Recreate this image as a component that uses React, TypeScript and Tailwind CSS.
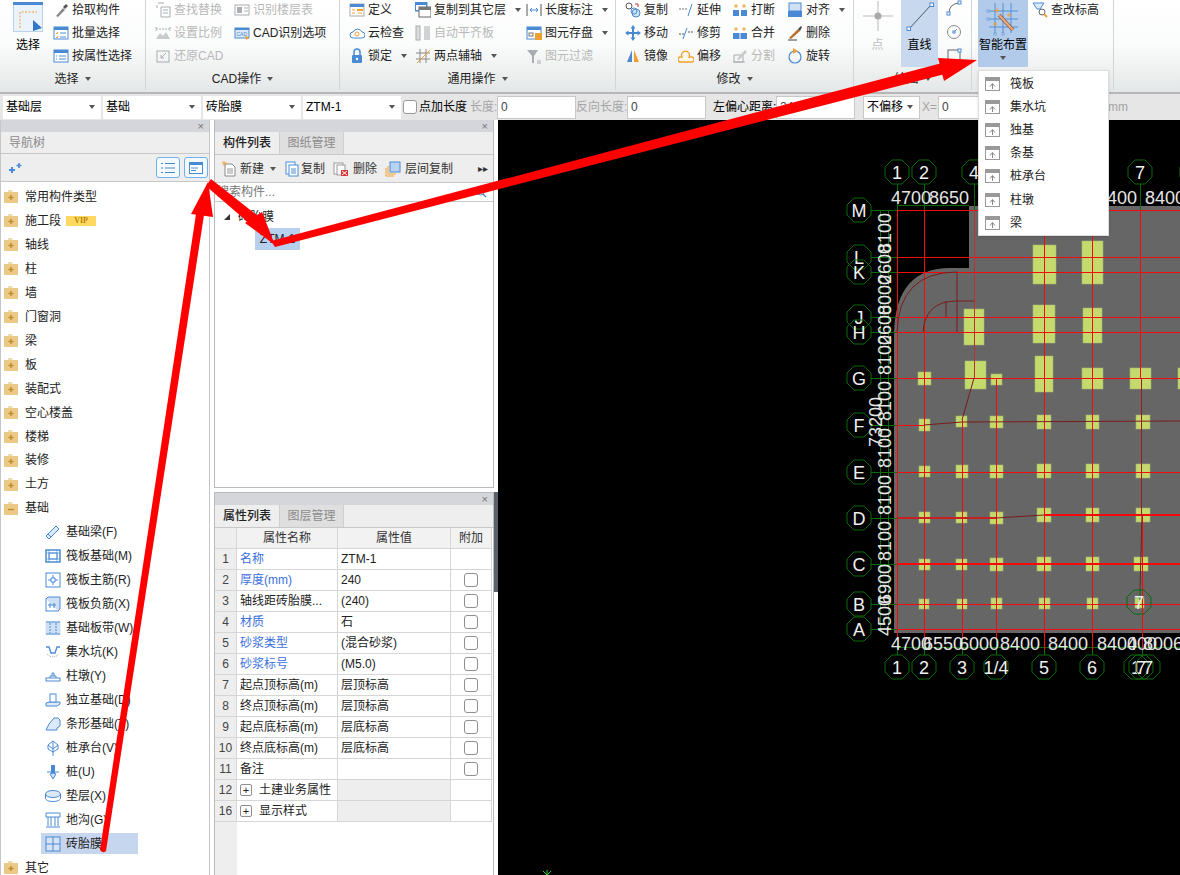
import type { ReactNode } from 'react'

const B = '#4a8ad4'
const O = '#f0a030'
const G = '#a9acb0'

const icons: Record<string, ReactNode> = {
  pick: (<><path d="M3 14 10 6l2 2-7 7z" fill="#888" /><path d="M10 5l3-3 2 2-3 3z" fill="#555" /></>),
  batch: (<><rect x="1" y="2" width="14" height="12" fill="#fff" stroke={B} /><rect x="1" y="2" width="14" height="3" fill={B} /><path d="M3 8l1 1 1-2M3 12l1 1 1-2" stroke={O} fill="none" /><path d="M7 8h6M7 12h6" stroke={B} /></>),
  attr: (<><rect x="1" y="2" width="14" height="12" fill="#fff" stroke={B} /><rect x="1" y="2" width="14" height="3" fill={B} /><path d="M3 8h1M3 11h1M6 8h7M6 11h7" stroke={B} /></>),
  find: (<><path d="M3 1h6M6 5h9v10H6zM8 8h5M8 11h5" stroke={G} fill="none" /><path d="M2 3v3" stroke={G} /></>),
  table: (<><rect x="1" y="3" width="14" height="10" fill="#fff" stroke={G} /><rect x="3" y="5" width="5" height="6" fill={G} /><path d="M10 6h4M10 9h4" stroke={G} /></>),
  scale: (<><path d="M1 14l4-6 3 3 3-4 4 7z" fill="#c8cacc" /><path d="M1 4h14M1 2v4M15 2v4" stroke={G} strokeDasharray="2 1" /></>),
  cad: (<><rect x="1" y="3" width="14" height="10" fill="#dbe8f7" stroke={B} /><rect x="1" y="3" width="14" height="2" fill={B} /><text x="2.5" y="11" fontSize="5" fill={B}>CAD</text><path d="M11 10l4 3-3 2z" fill={O} /></>),
  undo: (<><rect x="2" y="3" width="12" height="11" fill="none" stroke={G} /><path d="M6 10l5-5M6 7v3h3" stroke={G} fill="none" /></>),
  define: (<><rect x="1" y="2" width="14" height="12" fill="#fff" stroke="#aaa" /><rect x="1" y="2" width="14" height="3" fill={B} /><rect x="8" y="7" width="6" height="2" fill={O} /><path d="M3 8h3M3 11h3M9 11h4" stroke={O} /></>),
  cloud: (<><path d="M4 13a3 3 0 0 1 0-6 5 5 0 0 1 9 0 3 3 0 0 1 0 6z" fill="#fff" stroke={B} /><circle cx="8" cy="9" r="2" fill="none" stroke={O} /></>),
  lock: (<><path d="M5 7V4a3 3 0 0 1 6 0v3" fill="none" stroke={B} strokeWidth="1.5" /><rect x="3" y="7" width="10" height="8" rx="1" fill={B} /><circle cx="8" cy="11" r="1.2" fill="#fff" /></>),
  copyTo: (<><rect x="0" y="0" width="12" height="9" fill={B} stroke={B} /><rect x="1" y="3" width="10" height="5" fill="#fff" /><rect x="4" y="5" width="12" height="10" fill="#fff" stroke="#666" /><rect x="4" y="5" width="12" height="3" fill="#777" /></>),
  align: (<><rect x="1" y="1" width="4" height="14" fill="#ddd" stroke={G} /><rect x="9" y="1" width="6" height="14" fill="#d0d2d4" /></>),
  axis: (<><path d="M5 1v14M11 1v14M1 5h14M1 11h14" stroke="#888" /><path d="M2 15 15 2" stroke={O} /></>),
  length: (<><path d="M1 2v12M15 2v12" stroke="#555" /><path d="M4 8h8M4 8l2-2M4 8l2 2M12 8l-2-2M12 8l-2 2" stroke={B} fill="none" /></>),
  save: (<><rect x="1" y="2" width="14" height="12" fill="#fff" stroke={B} /><rect x="1" y="2" width="14" height="3" fill={B} /><rect x="9" y="8" width="7" height="7" fill={O} /><rect x="3" y="8" width="4" height="3" fill="none" stroke="#777" /></>),
  filter: (<><path d="M1 2h11L8 8v7H6V8z" fill={G} /><path d="M11 13h4M11 15h4" stroke={G} /></>),
  copy: (<><circle cx="4" cy="4" r="3" fill="none" stroke="#555" /><circle cx="11" cy="11" r="4" fill="#cfe3f8" stroke={B} /><circle cx="9" cy="9" r="3" fill="none" stroke={B} /><path d="M10 2h3v3" stroke="#c33" fill="none" /></>),
  move: <path d="M8 0l2.500 3.500H9V7h3.500V5.500L16 8l-3.500 2.500V9H9v3.500h1.500L8 16l-2.500-3.500H7V9H3.500v1.500L0 8l3.500-2.500V7H7V3.500H5.500z" fill={B} />,
  mirror: (<><path d="M7 2v12H2z" fill={B} /><path d="M9 2v12h5z" fill={O} /></>),
  extend: (<><path d="M1 7h8" stroke="#777" strokeDasharray="2 1" /><path d="M10 14l4-12" stroke={B} /></>),
  trim: (<><path d="M1 9h6M10 7h5" stroke="#555" strokeDasharray="2 1" /><path d="M5 14l4-11" stroke={B} /></>),
  offset: <path d="M2 14a2.500 2.500 0 0 1 1-5h1a4 4 0 1 1 7 0h2a2.500 2.500 0 0 1 1 5z" fill="#fff8e8" stroke={O} strokeWidth="1.300" />,
  breakIt: (<><rect x="1" y="8" width="6" height="6" fill={B} /><rect x="9" y="8" width="6" height="6" fill={B} /><path d="M4 2v4M2 4h4M12 2v4M10 4h4" stroke={O} /></>),
  merge: (<><rect x="1" y="8" width="14" height="6" fill={B} /><path d="M8 8v6" stroke="#fff" /><path d="M4 2v4M2 4h4M12 2v4M10 4h4" stroke={O} /></>),
  split: (<><path d="M2 14V7h9v7zM1 14h12" fill="none" stroke={G} /><path d="M5 11 13 2l2 2-8 8z" fill="#c8cacc" /></>),
  alignTo: (<><rect x="2" y="1" width="12" height="8" fill="#cfe0f5" stroke={B} /><rect x="1" y="9" width="14" height="6" fill={B} /></>),
  remove: (<><path d="M2 13 11 4l2 2-9 8z" fill="#b9702e" /><path d="M11 4l3-3 1 1-2 4z" fill="#444" /><path d="M1 15h9" stroke="#444" /></>),
  rotate: (<><circle cx="8" cy="9" r="6" fill="none" stroke={B} strokeWidth="1.2" /><path d="M6 0l5 3-5 3z" fill={O} /></>),
  arc: (<><path d="M3 13Q3 4 13 3" fill="none" stroke="#666" /><rect x="1" y="12" width="3" height="3" fill="#fff" stroke={B} /><rect x="12" y="1" width="3" height="3" fill="#fff" stroke={B} /></>),
  circle: (<><circle cx="8" cy="8" r="6.5" fill="none" stroke="#888" /><path d="M8 8l3-3" stroke="#888" /><rect x="7" y="7" width="2" height="2" fill="#fff" stroke={B} /></>),
  rect: (<><rect x="2" y="2" width="12" height="12" fill="none" stroke="#666" /><rect x="12" y="1" width="3" height="3" fill="#fff" stroke={B} /><rect x="1" y="12" width="3" height="3" fill="#fff" stroke={B} /></>),
  level: (<><path d="M1 1h11l-4 6H5z" fill="#dce9f8" stroke={B} /><circle cx="10" cy="10" r="3" fill="#fff" stroke="#666" /><path d="M12 12l3 3" stroke={O} strokeWidth="2" /></>),
  newOne: (<><path d="M4 3h7l3 3v9H4z" fill="#fff" stroke="#888" /><path d="M6 8h6M6 10h6M6 12h6" stroke="#999" /><path d="M3 0v5M1 2h5" stroke={O} /></>),
  dup: (<><rect x="2" y="1" width="9" height="12" fill="#fff" stroke={B} /><rect x="5" y="4" width="9" height="11" fill="#fff" stroke={B} /><path d="M7 8h5M7 10h5M7 12h5" stroke={B} /></>),
  del: (<><rect x="1" y="2" width="9" height="11" fill="#fff" stroke="#999" /><rect x="4" y="4" width="8" height="10" fill="#fff" stroke="#999" /><rect x="8" y="9" width="7" height="6" fill="#d93030" /><path d="M9 10l5 4M14 10l-5 4" stroke="#fff" /></>),
  floorCopy: (<><path d="M1 7v8h8M3 5v8h8" fill="none" stroke={O} /><rect x="5" y="1" width="10" height="10" fill="#b8d3f2" stroke={B} /></>),
  beam: (<><path d="M1 12 11 2l3 3L4 15z" fill="#dce9f8" stroke={B} /><path d="M3 10l3 3" stroke={B} /></>),
  raft: (<><rect x="1" y="2" width="14" height="12" fill="#fff" stroke={B} strokeWidth="1.5" /><rect x="4" y="5" width="8" height="6" fill="none" stroke={B} /><path d="M1 5h14M1 11h14M4 2v12M12 2v12" stroke={B} strokeWidth=".6" /></>),
  main: (<><rect x="1" y="1" width="14" height="14" fill="#fff" stroke={B} /><path d="M6 6h4v4H6zM8 3v3M8 10v3M3 8h3M10 8h3" stroke={B} fill="none" /></>),
  neg: (<><rect x="1" y="3" width="12" height="12" fill="#fff" stroke={B} /><path d="M1 3l2-2h12v12l-2 2" fill="#cfe0f5" stroke={B} /><path d="M5 7v5M9 7v5M3 9h8" stroke={B} /></>),
  strip: (<><rect x="1" y="2" width="14" height="12" fill="#cfe0f5" stroke="#cfe0f5" /><path d="M1 2h14M1 14h14" stroke={B} /><path d="M5 3v10M11 3v10" stroke={B} strokeDasharray="2 1" /></>),
  pit: (<><path d="M1 3h3l2 6h4l2-6h3" fill="none" stroke={B} strokeWidth="1.3" /><path d="M2 10q6 6 12 0" stroke="#999" strokeDasharray="1 1" fill="none" /></>),
  pier: (<><rect x="1" y="10" width="14" height="3" fill="#fff" stroke={B} /><path d="M5 10V8h6v2M7 8V5h2v3" fill="none" stroke={B} /></>),
  iso: (<><path d="M1 14v-3l4-1h10v2l-3 2z" fill="#dce9f8" stroke={B} /><rect x="5" y="2" width="6" height="8" fill="#fff" stroke={B} /></>),
  bar: <path d="M1 14l3-6 5-6h4l2 2v6l-3 2v2z" fill="#dce9f8" stroke={B} />,
  cap: <path d="M8 1l5 4v4l-5 3-5-3V5zM8 12v4M8 1v11M3 5l5 4 5-4" fill="none" stroke={B} />,
  pile: (<><rect x="6" y="1" width="4" height="8" fill={B} /><path d="M2 8h12M8 9l-3 1 3 5 3-5z" fill="#cfe0f5" stroke={B} /></>),
  cushion: (<><ellipse cx="8" cy="6" rx="7.5" ry="3.5" fill="#dce9f8" stroke={B} /><path d="M.5 6v4c0 2 3 3.5 7.5 3.5s7.5-1.5 7.5-3.5V6" fill="none" stroke={B} /></>),
  trench: (<><path d="M1 1h14v4H1zM3 5v9M13 5v9M1 15h14M6 5v9M10 5v9" fill="none" stroke={B} /></>),
  brick: (<><rect x="1" y="1" width="14" height="14" fill="#fff" fillOpacity=".3" stroke={B} /><path d="M8 1v14M1 8h14" stroke={B} /></>),
}

function Icon({ name, size = 16 }: { name: string; size?: number }) {
  return (
    <svg width={size} height={size} viewBox="0 0 16 16" className="shrink-0">
      {icons[name]}
    </svg>
  )
}

function Caret({ className = 'ml-[6px]' }: { className?: string }) {
  return <span className={`inline-block h-0 w-0 border-x-[3.5px] border-t-[4px] border-x-transparent border-t-[#555] ${className}`} />
}

function Item({ icon, label, caret, off }: { icon: string; label: string; caret?: boolean; off?: boolean }) {
  return (
    <div className={`flex h-[23px] items-center gap-[3px] whitespace-nowrap ${off ? 'text-[#b8b8b8]' : 'text-[#222]'}`}>
      <Icon name={icon} />
      <span>{label}</span>
      {caret && <Caret />}
    </div>
  )
}

function Col({ width, items }: { width: string; items: [string, string, number?][] }) {
  // flag: 1 = caret, 2 = disabled
  return (
    <div className={`${width} -mt-[2px] flex flex-col`}>
      {items.map(([icon, label, flag]) => (
        <Item key={label} icon={icon} label={label} caret={flag === 1} off={flag === 2} />
      ))}
    </div>
  )
}

function Group({ width, label, pad, children }: { width: string; label: string; pad?: string; children: ReactNode }) {
  return (
    <div className={`${width} flex h-[90px] shrink-0 flex-col border-r border-[#d2d5d5]`}>
      <div className={`flex h-[67px] ${pad ?? 'pl-[9px]'}`}>{children}</div>
      <div className="flex h-[23px] items-center justify-center text-[#222]">
        {label}
        {label && <Caret />}
      </div>
    </div>
  )
}

function Ribbon() {
  return (
    <div className="flex h-[92px] overflow-hidden bg-linear-to-b from-white via-[#fafbfb] to-[#e4e7e7]">
      <Group width="w-[146px]" label="选择" pad="pl-[13px]">
        <div className="flex w-[30px] flex-col items-center">
          <svg width="30" height="30" viewBox="0 0 30 30" className="mt-[2px] shrink-0">
            <rect x=".5" y=".5" width="29" height="29" fill="#eaf2fb" stroke="#bcd2ea" />
            <rect x="0" y="0" width="30" height="3" fill={B} />
            <path d="M7 26V10h17" fill="none" stroke={O} strokeDasharray="2 1.5" />
            <path d="M20 18l9 8-9 3z" fill="#2f78c8" />
          </svg>
          <span className="mt-[7px]">选择</span>
        </div>
        <div className="ml-[10px]">
          <Col width="w-[80px]" items={[['pick', '拾取构件'], ['batch', '批量选择'], ['attr', '按属性选择']]} />
        </div>
      </Group>
      <Group width="w-[194px]" label="CAD操作">
        <Col width="w-[79px]" items={[['find', '查找替换', 2], ['scale', '设置比例', 2], ['undo', '还原CAD', 2]]} />
        <Col width="w-[95px]" items={[['table', '识别楼层表', 2], ['cad', 'CAD识别选项']]} />
      </Group>
      <Group width="w-[276px]" label="通用操作">
        <Col width="w-[66px]" items={[['define', '定义'], ['cloud', '云检查'], ['lock', '锁定', 1]]} />
        <Col width="w-[111px]" items={[['copyTo', '复制到其它层', 1], ['align', '自动平齐板', 2], ['axis', '两点辅轴', 1]]} />
        <Col width="w-[85px]" items={[['length', '长度标注', 1], ['save', '图元存盘', 1], ['filter', '图元过滤', 2]]} />
      </Group>
      <Group width="w-[238px]" label="修改">
        <Col width="w-[53px]" items={[['copy', '复制'], ['move', '移动'], ['mirror', '镜像']]} />
        <Col width="w-[54px]" items={[['extend', '延伸'], ['trim', '修剪'], ['offset', '偏移']]} />
        <Col width="w-[55px]" items={[['breakIt', '打断'], ['merge', '合并'], ['split', '分割', 2]]} />
        <Col width="w-[60px]" items={[['alignTo', '对齐', 1], ['remove', '删除'], ['rotate', '旋转']]} />
      </Group>
      <Group width="w-[118px]" label="绘图" pad="pl-0">
        <div className="flex w-[47px] flex-col items-center pt-[1px] text-[#c0c0c0]">
          <svg width="30" height="30" viewBox="0 0 30 30" className="shrink-0">
            <path d="M15 0v30M0 15h30" stroke="#bbb" />
            <circle cx="15" cy="15" r="3.500" fill="#aaa" />
          </svg>
          <span className="mt-[8px]">点</span>
        </div>
        <div className="flex w-[37px] flex-col items-center bg-[#c8d8ee] pt-[1px]">
          <svg width="30" height="32" viewBox="0 0 30 32" className="shrink-0">
            <path d="M4 28 26 4" stroke="#556" />
            <rect x="2" y="26" width="3.5" height="3.5" fill="#fff" stroke={B} />
            <rect x="25" y="2" width="3.5" height="3.5" fill="#fff" stroke={B} />
          </svg>
          <span className="mt-[6px]">直线</span>
        </div>
        <div className="flex w-[31px] flex-col items-center gap-[8px]">
          <Icon name="arc" />
          <Icon name="circle" />
          <Icon name="rect" />
        </div>
      </Group>
      <Group width="w-[142px]" label="" pad="pl-[6px]">
        <div className="flex w-[50px] flex-col items-center bg-[#b2cbea] pt-[2px]">
          <svg width="34" height="34" viewBox="0 0 34 34" className="shrink-0">
            <path d="M9 1v30M17 1v30M25 1v30M3 9h29M3 17h29M3 25h29" stroke={B} strokeWidth=".9" />
            <path d="M13 13 27 28" stroke="#8a5a3a" strokeWidth="3.500" />
            <path d="M13 13 27 28" stroke="#eaa880" strokeWidth="2.200" />
            <path d="M11 6v5M8.500 8.500h5M23 11v4M21 13h4M9 20v4M7 22h4" stroke={O} />
            <rect x="1" y="8" width="2" height="2" fill="#fff" stroke={B} strokeWidth=".7" />
            <rect x="1" y="16" width="2" height="2" fill="#fff" stroke={B} strokeWidth=".7" />
            <rect x="8" y="31" width="2" height="2" fill="#fff" stroke={B} strokeWidth=".7" />
            <rect x="16" y="31" width="2" height="2" fill="#fff" stroke={B} strokeWidth=".7" />
          </svg>
          <span className="mt-[3px] whitespace-nowrap">智能布置</span>
          <Caret className="mt-[5px]" />
        </div>
        <div className="ml-[4px]">
          <Col width="w-[80px]" items={[['level', '查改标高']]} />
        </div>
      </Group>
    </div>
  )
}

function Select({ width, label }: { width: string; label: string }) {
  return (
    <div className={`${width} flex h-[23px] shrink-0 items-center justify-between bg-white px-[3px] pr-[6px]`}>
      <span className="whitespace-nowrap">{label}</span>
      <Caret className="" />
    </div>
  )
}

function Field({ width, value }: { width: string; value?: string }) {
  return (
    <div className={`${width} flex h-[23px] shrink-0 items-center border border-[#c8c8c8] bg-white px-[3px] text-[#444]`}>
      {value}
    </div>
  )
}

function OptionBar() {
  return (
    <div className="flex h-[28px] items-center gap-[2px] border-t-2 border-[#b5b6b6] bg-[#e6e6e6] pl-[3px] whitespace-nowrap">
      <Select width="w-[98px]" label="基础层" />
      <Select width="w-[98px]" label="基础" />
      <Select width="w-[98px]" label="砖胎膜" />
      <Select width="w-[98px]" label="ZTM-1" />
      <span className="h-[14px] w-[14px] shrink-0 rounded-[3px] border border-[#999] bg-white" />
      <span className="w-[49px]">点加长度</span>
      <span className="w-[25px] text-[#a5a5a5]">长度:</span>
      <Field width="w-[79px]" value="0" />
      <span className="-ml-[2px] w-[49px] text-[#a5a5a5]">反向长度:</span>
      <Field width="w-[79px]" value="0" />
      <span className="ml-[5px] w-[61px]">左偏心距离:</span>
      <Field width="w-[79px]" value="240" />
      <span className="ml-[6px] flex h-[23px] w-[57px] items-center justify-between border border-[#c8c8c8] bg-white px-[3px] pr-[6px]">
        不偏移
        <Caret className="" />
      </span>
      <span className="w-[14px] text-[#a5a5a5]">X=</span>
      <Field width="w-[60px]" value="0" />
      <span className="ml-[108px] text-[#a5a5a5]">mm</span>
    </div>
  )
}

function PanelBar() {
  return (
    <div className="flex h-[12px] shrink-0 items-center justify-end bg-[#d4d6db] pr-[5px] text-[11px] leading-none text-[#777]">×</div>
  )
}

function Folder({ open }: { open?: boolean }) {
  return (
    <svg width="14" height="13" viewBox="0 0 14 13" className="shrink-0">
      <path d="M4 0h4l1 2H4z" fill="#f0dcae" />
      <rect x="0" y="2" width="14" height="11" fill="#ecc987" />
      <path d={open ? 'M4 7.5h6' : 'M7 5v5M4.5 7.5h5'} stroke="#c08a30" strokeWidth="1.4" />
    </svg>
  )
}

const topNodes = ['常用构件类型', '施工段', '轴线', '柱', '墙', '门窗洞', '梁', '板', '装配式', '空心楼盖', '楼梯', '装修', '土方']
const children: [string, string][] = [
  ['beam', '基础梁(F)'], ['raft', '筏板基础(M)'], ['main', '筏板主筋(R)'], ['neg', '筏板负筋(X)'], ['strip', '基础板带(W)'],
  ['pit', '集水坑(K)'], ['pier', '柱墩(Y)'], ['iso', '独立基础(D)'], ['bar', '条形基础(T)'], ['cap', '桩承台(V)'],
  ['pile', '桩(U)'], ['cushion', '垫层(X)'], ['trench', '地沟(G)'], ['brick', '砖胎膜'],
]

function NavTree() {
  return (
    <div className="flex h-full w-[210px] shrink-0 flex-col overflow-hidden border-x border-[#c4c6c8]">
      <PanelBar />
      <div className="flex h-[22px] shrink-0 items-center border-b border-[#c8c8c8] bg-[#eeeeee] pl-[8px] text-[#8a8a8a]">导航树</div>
      <div className="flex h-[28px] shrink-0 items-center justify-between border-b border-[#c8c8c8] bg-[#eeeeee] pl-[7px] pr-[1px]">
        <svg width="14" height="12" viewBox="0 0 14 12">
          <path d="M4 5v6M1 8h6" stroke={B} strokeWidth="2" />
          <path d="M11 1v5M8.500 3.500h5" stroke={B} strokeWidth="1.600" />
        </svg>
        <div className="flex gap-[4px]">
          <span className="flex h-[21px] w-[24px] items-center justify-center rounded-[3px] border border-[#6fb0ee] bg-[#f4f9fe]">
            <svg width="14" height="12" viewBox="0 0 14 12">
              <path d="M0 1.500h2M0 6h2M0 10.500h2M4 1.500h10M4 6h10M4 10.500h10" stroke={B} />
            </svg>
          </span>
          <span className="flex h-[21px] w-[24px] items-center justify-center rounded-[3px] border border-[#6fb0ee] bg-[#f4f9fe]">
            <svg width="14" height="12" viewBox="0 0 14 12">
              <rect x=".5" y=".5" width="13" height="11" fill="#fff" stroke={B} />
              <rect x="0" y="0" width="14" height="3" fill={B} />
              <path d="M2 6h7M2 8.500h5" stroke={B} />
            </svg>
          </span>
        </div>
      </div>
      <div className="flex-1 bg-white pt-[3px] text-[#222]">
        {topNodes.map((n) => (
          <div key={n} className="flex h-[23.96px] items-center pl-[3px]">
            <Folder />
            <span className="ml-[7px]">{n}</span>
            {n === '施工段' && (
              <span className="ml-[5px] flex h-[10px] w-[30px] items-center justify-center bg-[#ffd863] font-['Liberation_Serif',serif] text-[8px] font-bold text-[#b8860b]">VIP</span>
            )}
          </div>
        ))}
        <div className="flex h-[23.96px] items-center pl-[3px]">
          <Folder open />
          <span className="ml-[7px]">基础</span>
        </div>
        {children.map(([icon, label]) => (
          <div key={label} className="ml-[40px] flex h-[23.96px] items-center whitespace-nowrap">
            <div className={`flex h-[21px] w-[97px] items-center gap-[5px] pl-[4px] ${label === '砖胎膜' ? 'bg-[#c6d6ee]' : ''}`}>
              <Icon name={icon} />
              {label}
            </div>
          </div>
        ))}
        <div className="flex h-[23.96px] items-center pl-[3px]">
          <Folder />
          <span className="ml-[7px]">其它</span>
        </div>
      </div>
    </div>
  )
}

function Tabs({ a, b }: { a: string; b: string }) {
  return (
    <div className="flex h-[23px] shrink-0 border-b border-[#c8c8c8] bg-[#eeeeee]">
      <div className="flex w-[64px] items-center justify-center font-medium text-[#222]">{a}</div>
      <div className="flex w-[65px] items-center justify-center border-x border-[#cfcfcf] bg-[#dfdfdf] text-[#8c8c8c]">{b}</div>
    </div>
  )
}

function ListPanel() {
  return (
    <div className="flex h-[368px] shrink-0 flex-col border-x border-b border-[#b9bbbd] bg-white">
      <PanelBar />
      <Tabs a="构件列表" b="图纸管理" />
      <div className="flex h-[28px] shrink-0 items-center justify-between border-b border-[#c8c8c8] bg-[#eeeeee] pl-[6px] pr-[5px] pt-[1px] text-[#333]">
        <div className="flex items-center">
          <Icon name="newOne" />
          <span className="ml-[3px]">新建</span>
          <Caret className="ml-[6px]" />
          <span className="ml-[8px]"><Icon name="dup" /></span>
          <span className="ml-[1px]">复制</span>
          <span className="ml-[8px]"><Icon name="del" /></span>
          <span className="ml-[4px]">删除</span>
          <span className="ml-[8px]"><Icon name="floorCopy" /></span>
          <span className="ml-[4px]">层间复制</span>
        </div>
        <span className="text-[10px] leading-none text-[#333]">▸▸</span>
      </div>
      <div className="flex h-[19px] shrink-0 items-center justify-between border-b border-[#c8c8c8] pl-[2px] pr-[6px] text-[#777]">
        <span>搜索构件...</span>
        <svg width="11" height="11" viewBox="0 0 11 11">
          <circle cx="4.500" cy="4.500" r="3.500" fill="none" stroke={B} />
          <path d="M7 7l3 3" stroke={B} strokeWidth="1.500" />
        </svg>
      </div>
      <div className="flex-1 pt-[4px] text-[#222]">
        <div className="flex h-[22px] items-center pl-[9px]">
          <span className="h-0 w-0 border-b-[6px] border-l-[6px] border-b-[#333] border-l-transparent" />
          <span className="ml-[8px]">砖胎膜</span>
        </div>
        <div className="ml-[40px] flex h-[22px] w-[45px] items-center justify-center bg-[#b9cfee]">ZTM-1</div>
      </div>
    </div>
  )
}

const attrRows: [string, string, string, boolean, boolean][] = [
  ['1', '名称', 'ZTM-1', true, false],
  ['2', '厚度(mm)', '240', true, true],
  ['3', '轴线距砖胎膜...', '(240)', false, true],
  ['4', '材质', '石', true, true],
  ['5', '砂浆类型', '(混合砂浆)', true, true],
  ['6', '砂浆标号', '(M5.0)', true, true],
  ['7', '起点顶标高(m)', '层顶标高', false, true],
  ['8', '终点顶标高(m)', '层顶标高', false, true],
  ['9', '起点底标高(m)', '层底标高', false, true],
  ['10', '终点底标高(m)', '层底标高', false, true],
  ['11', '备注', '', false, true],
]

const cell = 'flex items-center border-r border-b border-[#d6d6d6]'

function AttrPanel() {
  return (
    <div className="flex min-h-0 flex-1 flex-col border-x border-t border-[#b9bbbd] bg-white">
      <PanelBar />
      <Tabs a="属性列表" b="图层管理" />
      <div className="flex h-[21px] shrink-0 text-[#333]">
        <div className={`${cell} w-[22px] bg-[#eeeeee]`} />
        <div className={`${cell} w-[101px] justify-center bg-[#f2f2f2]`}>属性名称</div>
        <div className={`${cell} w-[113px] justify-center bg-[#f2f2f2]`}>属性值</div>
        <div className={`${cell} w-[41px] justify-center bg-[#f2f2f2]`}>附加</div>
      </div>
      {attrRows.map(([no, name, value, blue, check]) => (
        <div key={no} className="flex h-[21px] shrink-0 text-[#222]">
          <div className={`${cell} w-[22px] justify-center bg-[#eeeeee] text-[#444]`}>{no}</div>
          <div className={`${cell} w-[101px] pl-[3px] whitespace-nowrap ${blue ? 'text-[#3a6fe0]' : ''}`}>{name}</div>
          <div className={`${cell} w-[113px] pl-[3px]`}>{value}</div>
          <div className={`${cell} w-[41px] justify-center`}>
            {check && <span className="h-[14px] w-[14px] rounded-[3px] border border-[#8f8f8f]" />}
          </div>
        </div>
      ))}
      {[['12', '土建业务属性'], ['16', '显示样式']].map(([no, name]) => (
        <div key={no} className="flex h-[21px] shrink-0 text-[#222]">
          <div className={`${cell} w-[22px] justify-center bg-[#eeeeee] text-[#444]`}>{no}</div>
          <div className={`${cell} w-[101px] pl-[3px]`}>
            <span className="flex h-[12px] w-[12px] items-center justify-center rounded-[2px] border border-[#8f8f8f] text-[11px] leading-none">+</span>
            <span className="ml-[7px]">{name}</span>
          </div>
          <div className={`${cell} w-[113px] bg-[#eeeeee]`} />
          <div className={`${cell} w-[41px]`} />
        </div>
      ))}
      <div className="flex-1">
        <div className="h-full w-[22px] bg-[#eeeeee]" />
      </div>
    </div>
  )
}

function Octagon({ x, y, label }: { x: number; y: number; label?: string }) {
  const r = 13
  const pts = Array.from({ length: 8 }, (_, i) => {
    const a = Math.PI / 8 + (i * Math.PI) / 4
    return `${x + r * Math.cos(a)},${y + r * Math.sin(a)}`
  }).join(' ')
  return (
    <g>
      <polygon points={pts} fill="none" stroke="#0a6a0a" />
      {label && <text x={x} y={y + 6.5} textAnchor="middle" fontSize="18" fill="#f0f0f0">{label}</text>}
    </g>
  )
}

const rowsY: [string, number][] = [['M', 210], ['L', 257], ['K', 272], ['J', 317], ['H', 332], ['G', 378], ['F', 425], ['E', 472], ['D', 518], ['C', 564], ['B', 604], ['A', 629]]
const leftDims: [string, number][] = [['8100', 233], ['2600', 264], ['8000', 295], ['2600', 325], ['8100', 355], ['8100', 401], ['8100', 448], ['8100', 495], ['8100', 541], ['6900', 584], ['4500', 616]]
const topDims: [string, number][] = [['4700', 911], ['8650', 949], ['400', 1122], ['8400', 1165]]
const botDims: [string, number][] = [['4700', 911], ['6550', 943], ['6000', 979], ['8400', 1020], ['8400', 1068], ['8400', 1117], ['400', 1142], ['8006', 1163]]
const pads: [number, number, number, number][] = [
  [1033, 245, 23, 39], [1082, 241, 21, 43],
  [964, 309, 20, 36], [1033, 305, 22, 38], [1083, 308, 19, 35],
  [918, 372, 13, 13], [965, 361, 21, 28], [991, 374, 11, 11], [1035, 356, 18, 36], [1082, 368, 21, 21], [1130, 368, 21, 21], [1178, 368, 4, 21],
  [919, 419, 11, 12], [956, 416, 11, 11], [990, 416, 13, 12], [1037, 415, 14, 14], [1086, 415, 13, 14], [1136, 415, 14, 14],
  [919, 466, 11, 11], [956, 465, 12, 13], [990, 465, 13, 13], [1037, 464, 14, 14], [1086, 464, 13, 14], [1136, 464, 14, 14],
  [919, 512, 11, 11], [956, 512, 11, 11], [990, 512, 13, 12], [1037, 508, 14, 14], [1086, 508, 13, 14], [1136, 508, 14, 14],
  [919, 559, 11, 11], [956, 559, 11, 11], [990, 558, 13, 13], [1037, 557, 14, 14], [1086, 557, 13, 14], [1134, 557, 14, 14],
  [919, 599, 10, 10], [957, 599, 10, 10], [991, 598, 11, 11], [1039, 598, 11, 11], [1087, 598, 11, 11], [1135, 598, 9, 10],
]

function CadCanvas() {
  const fullRows = rowsY.filter(([l]) => l !== 'F' && l !== 'D')
  return (
    <svg width="682" height="755" viewBox="498 120 682 755" className="block font-['Liberation_Sans',sans-serif]">
      <path d="M969 206H1180V633H894V332Q896 268 950 268H969Z" fill="#666666" />
      {pads.map(([x, y, w, h]) => (
        <rect key={`${x}-${y}`} x={x} y={y} width={w} height={h} fill="#c5da6c" stroke="#a5b56e" strokeWidth=".6" />
      ))}
      <g stroke="#0a6a0a" shapeRendering="crispEdges">
        <path d="M880 210V630M888 210V630M897 205H969M897 647H1180" />
        {rowsY.map(([l, y]) => <path key={l} d={`M871 ${y}H897`} />)}
        {[897, 924, 974, 1140].map((x) => <path key={x} d={`M${x} 184V210`} />)}
        {[897, 924, 962, 996, 1044, 1092, 1142].map((x) => <path key={x} d={`M${x} 633V655`} />)}
      </g>
      <g stroke="#f50a0a" shapeRendering="crispEdges">
        {fullRows.map(([l, y]) => <path key={l} d={`M897 ${y}H1180`} strokeWidth={l === 'C' ? 2 : 1} />)}
        <path d="M897 425H924" />
        <path d="M897 210V640M924 210V640M962 420V640M996 378V640M1044 210V650M1092 210V650M1140 210V378M1142 515V650" />
        <path d="M974 210V378" stroke="#c03030" />
        <path d="M897 518H996" strokeWidth="2" stroke="#c82020" />
        <path d="M1044 515H1180" strokeWidth="2" />
        <path d="M1141 378V515" stroke="#a81818" />
      </g>
      <g stroke="#7a1c1c" fill="none">
        <path d="M897 332Q899 272 957 272V332M923 332Q925 301 957 301H974M946 301V317" />
        <path d="M974 378 962 420M924 425 962 422 1180 421M996 518 1044 515M1142 515 1140 590" />
      </g>
      <path d="M1140 590V600" stroke="#0a6a0a" />
      {rowsY.map(([l, y]) => <Octagon key={l} x={859} y={y} label={l} />)}
      {[[897, '1'], [924, '2'], [974, '4'], [1140, '7']].map(([x, l]) => (
        <Octagon key={`t${x}`} x={x as number} y={172} label={l as string} />
      ))}
      <Octagon x={1192} y={172} />
      {[[897, '1'], [924, '2'], [962, '3'], [996, '1/4'], [1044, '5'], [1092, '6'], [1136, '1'], [1141, '7'], [1148, '7']].map(([x, l]) => (
        <Octagon key={`b${x}`} x={x as number} y={667} label={l as string} />
      ))}
      <Octagon x={1139} y={602} label="7" />
      <g fill="#e6e6e6" fontSize="18">
        {topDims.map(([t, x]) => <text key={x} x={x} y={204} textAnchor="middle">{t}</text>)}
        {botDims.map(([t, x]) => <text key={x} x={x} y={650} textAnchor="middle">{t}</text>)}
        {leftDims.map(([t, y]) => (
          <text key={y} x={891} y={y} textAnchor="middle" transform={`rotate(-90 891 ${y})`}>{t}</text>
        ))}
        <text x={882} y={422} textAnchor="middle" transform="rotate(-90 882 422)">73200</text>
      </g>
      <path d="M547 870v5M543 871l4 4 4-4" stroke="#2ecc40" fill="none" />
    </svg>
  )
}

const menu = ['筏板', '集水坑', '独基', '条基', '桩承台', '柱墩', '梁']

function SmartMenu() {
  return (
    <div className="absolute left-[978px] top-[70px] w-[131px] border border-[#dddddd] bg-white py-[1px] shadow-sm">
      {menu.map((m) => (
        <div key={m} className="flex h-[23.2px] items-center pl-[6px] text-[#222]">
          <svg width="15" height="14" viewBox="0 0 15 14">
            <rect x=".5" y=".5" width="14" height="13" fill="#fff" stroke="#999" />
            <rect x="0" y="0" width="15" height="4" fill="#999" />
            <path d="M7.500 12V7M5 9.500l2.500-3 2.500 3" stroke="#888" fill="none" />
          </svg>
          <span className="ml-[10px]">{m}</span>
        </div>
      ))}
    </div>
  )
}

function RedArrows() {
  return (
    <svg width="1180" height="875" viewBox="0 0 1180 875" className="pointer-events-none absolute left-0 top-0">
      <g fill="#ff0000" stroke="none">
        <path d="M208 182 191 214 213 217Z" />
        <path d="M275 245 245 223 262 212Z" />
        <path d="M977 60 938 58 944 81Z" />
        <path d="M100 850Q103 854 106 851L204 215 196 214Z" />
        <path d="M206 186 211 179 258 216 250 224Z" />
        <path d="M271 241 942 63 945 74 275 247Z" />
      </g>
    </svg>
  )
}

export default function App() {
  return (
    <div className="relative h-[875px] w-[1180px] overflow-hidden bg-white font-['Liberation_Sans','Noto_Sans_CJK_SC',sans-serif] text-[12px] leading-none">
      <Ribbon />
      <OptionBar />
      <div className="flex h-[755px] bg-white">
        <NavTree />
        <div className="ml-[4px] flex h-full w-[280px] shrink-0 flex-col gap-[4px]">
          <ListPanel />
          <AttrPanel />
        </div>
        <div className="flex w-[4px] shrink-0 flex-col pt-[372px]">
          <div className="h-[100px] bg-[#59616b]" />
        </div>
        <div className="flex-1 overflow-hidden bg-black">
          <CadCanvas />
        </div>
      </div>
      <SmartMenu />
      <RedArrows />
    </div>
  )
}
